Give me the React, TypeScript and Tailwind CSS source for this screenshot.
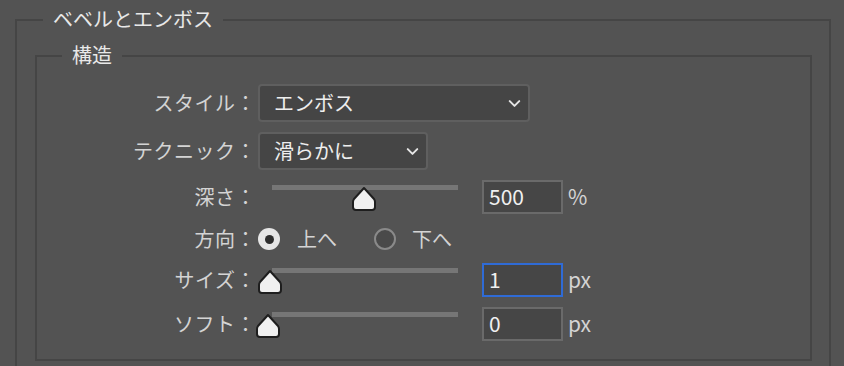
import { ChevronDown } from "lucide-react";

const font = "font-['Hiragino_Sans','Noto_Sans_CJK_JP',sans-serif]";

const Label = ({ text }: { text: string }) => (
  <div className="w-[219px] shrink-0 text-right text-[20px] tracking-[0.5px] text-[#d4d4d4]">{text}</div>
);

const Select = ({ value, width }: { value: string; width: string }) => (
  <div
    className={`${width} h-[38px] flex items-center justify-between rounded-[4px] border-2 border-[#5f5f5f] bg-[#454545] pl-[14px] pr-[4px] text-[20px] text-[#eeeeee]`}
  >
    <span>{value}</span>
    <ChevronDown size={19} strokeWidth={2.5} className="text-[#e6e6e6]" />
  </div>
);

const Thumb = ({ left }: { left: number }) => (
  <svg
    width="26"
    height="26"
    viewBox="0 0 26 26"
    className="absolute top-[6px]"
    style={{ left }}
  >
    <path
      d="M13 2 L23 13 Q24 14.5 24 16 L24 21 Q24 24 21 24 L5 24 Q2 24 2 21 L2 16 Q2 14.5 3 13 Z"
      fill="#f0f0f0"
      stroke="#1e1e1e"
      strokeWidth="2"
      strokeLinejoin="round"
    />
  </svg>
);

const Slider = ({ thumb }: { thumb: number }) => (
  <div className="relative w-[214px] h-[34px] shrink-0">
    <div className="absolute left-[14px] top-[5px] w-[186px] h-[5px] bg-[#767676]" />
    <Thumb left={thumb} />
  </div>
);

const NumberBox = ({ value, unit, focused }: { value: string; unit: string; focused?: boolean }) => (
  <div className="flex items-center ml-[8px]">
    <div
      className={`w-[81px] h-[34px] flex items-center border-2 px-[5px] bg-[#464646] text-[21px] text-[#f0f0f0] ${
        focused ? "border-[#2f6bd6]" : "border-[#6a6a6a]"
      }`}
    >
      {value}
    </div>
    <span className="ml-[5px] text-[21px] text-[#d4d4d4]">{unit}</span>
  </div>
);

const Radio = ({ checked }: { checked?: boolean }) =>
  checked ? (
    <div className="w-[22px] h-[22px] rounded-full bg-[#e6e6e6] flex items-center justify-center">
      <div className="w-[9px] h-[9px] rounded-full bg-[#2e2e2e]" />
    </div>
  ) : (
    <div className="w-[22px] h-[22px] rounded-full border-2 border-[#8a8a8a] bg-[#4a4a4a]" />
  );

export default function App() {
  return (
    <div className={`${font} w-[844px] h-[366px] overflow-hidden bg-[#535353] pt-[19px] pl-[15px] pr-[13px]`}>
      <div className="relative h-[400px] border-2 border-b-0 border-[#454545] pt-[34px] pl-[18px] pr-[17px]">
        <span className="absolute -top-[16px] left-[26px] px-[10px] bg-[#535353] text-[20px] leading-[28px] text-[#e8e8e8]">
          ベベルとエンボス
        </span>

        <div className="relative h-[306px] border-2 border-[#454545] pt-[27px]">
          <span className="absolute -top-[16px] left-[25px] px-[10px] bg-[#535353] text-[20px] leading-[28px] text-[#e8e8e8]">
            構造
          </span>

          <div className="flex flex-col">
            <div className="flex items-center gap-[2px] h-[38px]">
              <Label text="スタイル：" />
              <Select value="エンボス" width="w-[272px]" />
            </div>

            <div className="flex items-center gap-[2px] h-[38px] mt-[10px]">
              <Label text="テクニック：" />
              <Select value="滑らかに" width="w-[170px]" />
            </div>

            <div className="flex items-center gap-[2px] h-[34px] mt-[10px]">
              <Label text="深さ：" />
              <Slider thumb={93} />
              <NumberBox value="500" unit="%" />
            </div>

            <div className="flex items-center gap-[2px] h-[24px] mt-[13px]">
              <Label text="方向：" />
              <div className="flex items-center text-[20px] text-[#d4d4d4]">
                <Radio checked />
                <span className="ml-[17px]">上へ</span>
                <div className="ml-[37px]">
                  <Radio />
                </div>
                <span className="ml-[16px]">下へ</span>
              </div>
            </div>

            <div className="flex items-center gap-[2px] h-[34px] mt-[12px]">
              <Label text="サイズ：" />
              <Slider thumb={-1} />
              <NumberBox value="1" unit="px" focused />
            </div>

            <div className="flex items-center gap-[2px] h-[34px] mt-[10px]">
              <Label text="ソフト：" />
              <Slider thumb={-3} />
              <NumberBox value="0" unit="px" />
            </div>
          </div>
        </div>
      </div>
    </div>
  );
}
